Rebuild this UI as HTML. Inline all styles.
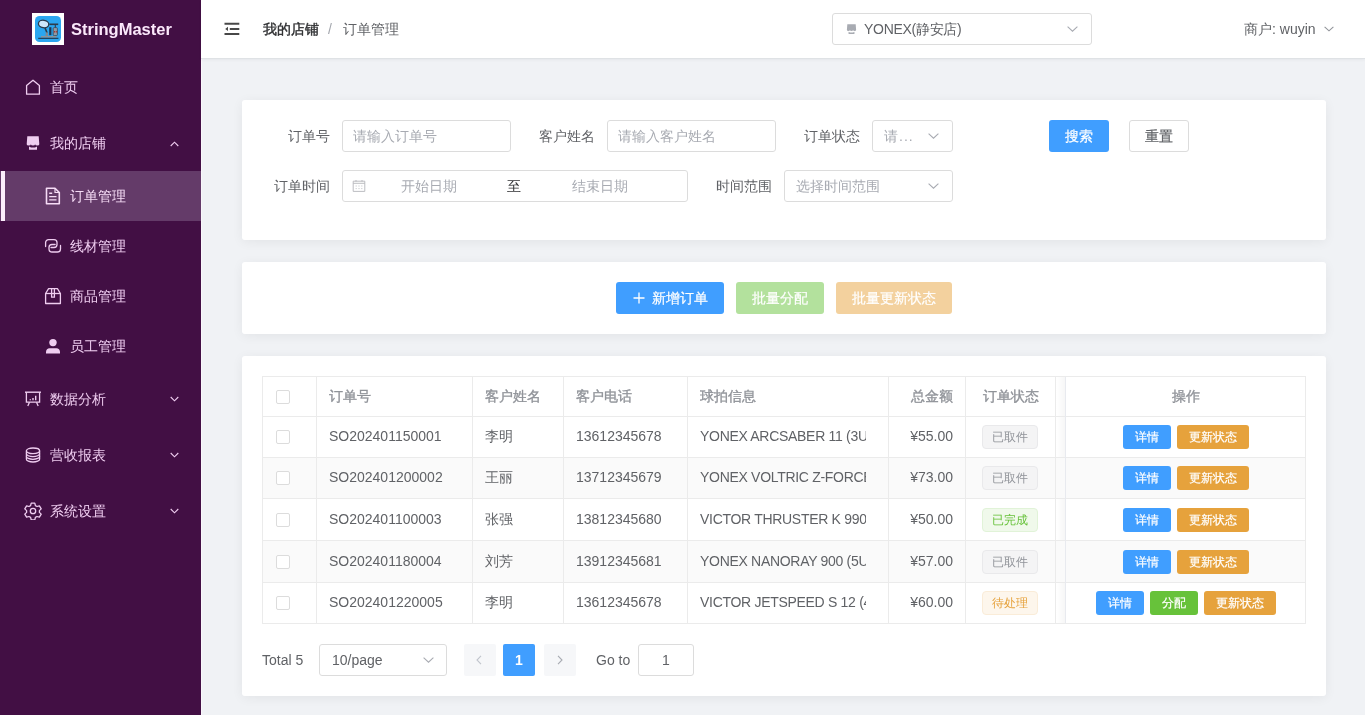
<!DOCTYPE html>
<html><head><meta charset="utf-8">
<style>
*{box-sizing:border-box;margin:0;padding:0}
html,body{width:1365px;height:715px;overflow:hidden}
#wrap{position:absolute;left:0;top:0;width:1365px;height:715px;will-change:transform}
body{font-family:"Liberation Sans",sans-serif;font-size:14px;color:#606266;background:#f0f2f5;position:relative}
.abs{position:absolute}
#side{position:absolute;left:0;top:0;width:201px;height:715px;background:#420f44}
.logo{position:absolute;left:32px;top:13px;width:32px;height:32px;background:#fff}
.logo .in{position:absolute;left:3px;top:3px;width:26px;height:26px;border-radius:6px;background:#2ea6ee}
.brand{position:absolute;left:71px;top:18px;font-size:16.5px;font-weight:bold;color:#fbe8fb;line-height:22px;white-space:nowrap}
.mi{position:absolute;left:0;width:201px;color:#efcdf0;line-height:20px;white-space:nowrap}
.mi .t{position:absolute;left:50px}
.mi.sub .t{left:70px}
.mi svg{position:absolute}
.mi .arr{position:absolute;left:170px}
.active{background:#643b69}
.active .bar{position:absolute;left:1px;top:0;width:4px;height:50px;background:#fbeefb}
#hdr{position:absolute;left:201px;top:0;width:1164px;height:59px;background:#fff;border-bottom:1px solid #dfe2e5;box-shadow:0 1px 3px rgba(0,21,41,.05)}
.card{position:absolute;left:242px;width:1084px;background:#fff;border-radius:3px;box-shadow:0 2px 12px rgba(0,0,0,.06)}
.lbl{position:absolute;color:#606266;white-space:nowrap;line-height:20px;text-align:right}
.inp{position:absolute;height:32px;border:1px solid #dcdcdc;border-radius:3px;background:#fff}
.ph{position:absolute;color:#a8abb2;white-space:nowrap;line-height:20px}
.btn{position:absolute;height:32px;border-radius:3px;color:#fff;text-align:center;line-height:32px;font-weight:500;white-space:nowrap;-webkit-text-stroke:0.2px currentColor}
.chev{position:absolute}
table{border-collapse:collapse}
.tbl{position:absolute;left:262px;top:376px;width:1044px;height:248px;border:1px solid #ebebeb;overflow:hidden;background:#fff}
.row{position:absolute;left:0;width:1044px;border-bottom:1px solid #ebeef5}
.vl{position:absolute;top:0;width:1px;height:247px;background:#ebeef5}
.cell{position:absolute;white-space:nowrap;line-height:20px;overflow:hidden}
.hd{color:#909399;font-weight:normal;-webkit-text-stroke:0.35px #909399}
.cb{position:absolute;left:14px;width:14px;height:14px;border:1px solid #dcdcdc;border-radius:2px;background:#fff}
.tag{position:absolute;height:24px;line-height:22px;font-size:12px;border-radius:4px;border:1px solid;padding:0 9px;white-space:nowrap}
.tinfo{background:#f4f4f5;border-color:#e9e9eb;color:#909399}
.tsucc{background:#f0f9eb;border-color:#e1f3d8;color:#67c23a}
.twarn{background:#fdf6ec;border-color:#faecd8;color:#e6a23c}
.sb{position:absolute;height:24px;line-height:24px;font-size:12px;color:#fff;border-radius:3px;text-align:center;white-space:nowrap;-webkit-text-stroke:0.2px #fff}
.bp{background:#409eff}.bs{background:#67c23a}.bw{background:#e6a23c}
</style></head><body><div id="wrap">
<div id="side">

  <div class="logo"><svg class="abs" style="left:0;top:0" width="32" height="32" viewBox="0 0 32 32"><rect x="3" y="3" width="26" height="26" rx="4.5" fill="#2ba6f0"/><g transform="translate(3,3)"><ellipse cx="8.6" cy="8" rx="5.2" ry="3.7" transform="rotate(8 8.6 8)" fill="#cfe6fa" stroke="#2d3a4a" stroke-width="1.3"/><path d="M10 11.8L12.4 17.8" stroke="#2d3a4a" stroke-width="1.6"/><rect x="10.6" y="16.4" width="2.4" height="4" fill="#7d8a96"/><rect x="14.2" y="11.2" width="2.2" height="8" fill="#1f3550"/><path d="M14.4 8.3H23.2" stroke="#2d3a4a" stroke-width="1.6"/><rect x="18.2" y="11.6" width="4.2" height="8" rx="1" fill="#8f9aa6" stroke="#2d3a4a" stroke-width="0.7"/><rect x="19" y="15" width="1.1" height="1.5" fill="#a33"/><rect x="20.8" y="15" width="1.1" height="1.5" fill="#a33"/><path d="M20.3 9v2.6" stroke="#2d3a4a" stroke-width="1.1"/><rect x="6" y="20" width="15.5" height="1.6" fill="#8b949c"/><path d="M3.2 22.3H23.4" stroke="#1c2b3d" stroke-width="1"/></g></svg></div>
  <div class="brand">StringMaster</div>
  <div class="mi" style="top:59px;height:56px">
    <svg style="left:25px;top:20px" width="16" height="16" viewBox="0 0 16 16"><path d="M1.6 15.2V6.6L8 1.2l6.4 5.4v8.6z" fill="none" stroke="#efcdf0" stroke-width="1.3" stroke-linejoin="round"/></svg>
    <span class="t" style="top:18px">首页</span>
  </div>
  <div class="mi" style="top:115px;height:56px">
    <svg style="left:26px;top:21px" width="14" height="15" viewBox="0 0 14 15"><path d="M0.7 8.2L1.3 0.3H12.7L13.3 8.2A2.1 1.4 0 0 1 9.1 8.2A2.1 1.4 0 0 1 4.9 8.2A2.1 1.4 0 0 1 0.7 8.2Z" fill="#efcdf0"/><path d="M3 10.4Q7 12.8 11 10.4V13.8H3Z" fill="#efcdf0"/></svg>
    <span class="t" style="top:18px">我的店铺</span>
    <svg class="arr" style="top:26px" width="9" height="6" viewBox="0 0 9 6"><path d="M0.7 5L4.5 1.2 8.3 5" fill="none" stroke="#efcdf0" stroke-width="1.1"/></svg>
  </div>
  <div class="mi sub active" style="top:171px;height:50px">
    <div class="bar"></div>
    <svg style="left:45px;top:16px" width="16" height="18" viewBox="0 0 16 18"><path d="M1.5 1.2h8.5l4.3 4.3v11.3H1.5z" fill="none" stroke="#f6dcf6" stroke-width="1.6" stroke-linejoin="round"/><path d="M10 1.2v4.3h4.3" fill="none" stroke="#f6dcf6" stroke-width="1.2"/><path d="M4.2 6.3h3M4.2 9.6h7.3M4.2 12.9h7.3" stroke="#f6dcf6" stroke-width="1.4"/></svg>
    <span class="t" style="top:15px;color:#f6dcf6">订单管理</span>
  </div>
  <div class="mi sub" style="top:221px;height:50px">
    <svg style="left:44px;top:16px" width="18" height="17" viewBox="0 0 18 17"><path d="M1.6 9.6V5.6a3 3 0 0 1 3-3H10a3 3 0 0 1 3 3v1.9a3 3 0 0 1-3 3H7" fill="none" stroke="#efcdf0" stroke-width="1.3" stroke-linecap="round"/><path d="M16.5 8.4V12a3 3 0 0 1-3 3H8a3 3 0 0 1-3-3v-1.5a3 3 0 0 1 3-3h3.1" fill="none" stroke="#efcdf0" stroke-width="1.3" stroke-linecap="round"/></svg>
    <span class="t" style="top:15px">线材管理</span>
  </div>
  <div class="mi sub" style="top:271px;height:50px">
    <svg style="left:44px;top:16px" width="18" height="18" viewBox="0 0 18 18"><path d="M1.6 6.5L4.6 1.6h8.8l3 4.9v10H1.6z" fill="none" stroke="#efcdf0" stroke-width="1.3" stroke-linejoin="round"/><path d="M1.6 6.5h14.8" stroke="#efcdf0" stroke-width="1.3"/><path d="M7.6 1.6v8.6h2.8V1.6" fill="none" stroke="#efcdf0" stroke-width="1.3"/></svg>
    <span class="t" style="top:15px">商品管理</span>
  </div>
  <div class="mi sub" style="top:321px;height:50px">
    <svg style="left:45px;top:17px" width="16" height="16" viewBox="0 0 16 16"><circle cx="8" cy="4.6" r="3.7" fill="#efcdf0"/><path d="M1 15.4v-1.6c0-2 1.6-3.6 3.6-3.6h6.8c2 0 3.6 1.6 3.6 3.6v1.6z" fill="#efcdf0"/></svg>
    <span class="t" style="top:15px">员工管理</span>
  </div>
  <div class="mi" style="top:371px;height:56px">
    <svg style="left:24px;top:20px" width="18" height="16" viewBox="0 0 18 16"><path d="M1 1.2h16" stroke="#efcdf0" stroke-width="1.4"/><path d="M2.4 1.2v10h13.2v-10" fill="none" stroke="#efcdf0" stroke-width="1.3"/><path d="M5.5 11.2L3.8 15M12.5 11.2L14.2 15" stroke="#efcdf0" stroke-width="1.3"/><path d="M6.3 8.2v1M9 7v2.2M11.7 4.8v4.4" stroke="#efcdf0" stroke-width="1.4"/></svg>
    <span class="t" style="top:18px">数据分析</span>
    <svg class="arr" style="top:25px" width="9" height="6" viewBox="0 0 9 6"><path d="M0.7 1L4.5 4.8 8.3 1" fill="none" stroke="#efcdf0" stroke-width="1.1"/></svg>
  </div>
  <div class="mi" style="top:427px;height:56px">
    <svg style="left:25px;top:20px" width="16" height="16" viewBox="0 0 16 16"><ellipse cx="8" cy="3.8" rx="6.6" ry="2.8" fill="none" stroke="#efcdf0" stroke-width="1.3"/><path d="M1.4 3.8v8.4c0 1.5 3 2.8 6.6 2.8s6.6-1.3 6.6-2.8V3.8" fill="none" stroke="#efcdf0" stroke-width="1.3"/><path d="M1.4 6.8c0 1.5 3 2.8 6.6 2.8s6.6-1.3 6.6-2.8M1.4 9.5c0 1.5 3 2.8 6.6 2.8s6.6-1.3 6.6-2.8" fill="none" stroke="#efcdf0" stroke-width="1.3"/></svg>
    <span class="t" style="top:18px">营收报表</span>
    <svg class="arr" style="top:25px" width="9" height="6" viewBox="0 0 9 6"><path d="M0.7 1L4.5 4.8 8.3 1" fill="none" stroke="#efcdf0" stroke-width="1.1"/></svg>
  </div>
  <div class="mi" style="top:483px;height:56px">
    <svg style="left:24px;top:19px" width="18" height="18" viewBox="0 0 18 18"><path d="M7.2 1.2h3.6l0.6 2.4 1.6 0.9 2.4-0.7 1.8 3.1-1.8 1.7v1.8l1.8 1.7-1.8 3.1-2.4-0.7-1.6 0.9-0.6 2.4H7.2l-0.6-2.4-1.6-0.9-2.4 0.7-1.8-3.1 1.8-1.7V8.6L0.8 6.9l1.8-3.1 2.4 0.7 1.6-0.9z" fill="none" stroke="#efcdf0" stroke-width="1.3" stroke-linejoin="round"/><circle cx="9" cy="9" r="2.7" fill="none" stroke="#efcdf0" stroke-width="1.3"/></svg>
    <span class="t" style="top:18px">系统设置</span>
    <svg class="arr" style="top:25px" width="9" height="6" viewBox="0 0 9 6"><path d="M0.7 1L4.5 4.8 8.3 1" fill="none" stroke="#efcdf0" stroke-width="1.1"/></svg>
  </div>
</div>
<div class="abs" style="left:201px;top:59px;width:1px;height:656px;background:#faf7fb"></div>
<div id="hdr">
  <svg style="position:absolute;left:22px;top:22px" width="18" height="14" viewBox="0 0 18 14"><path d="M1.5 1.8h14.8M6.8 6.9h9.5M1.5 12h14.8" stroke="#484848" stroke-width="2"/><path d="M2.2 6.9L5 4.8v4.2z" fill="#484848"/></svg>
  <span class="abs" style="left:62px;top:19px;line-height:20px;color:#303133;-webkit-text-stroke:0.4px #303133">我的店铺</span>
  <span class="abs" style="left:127px;top:19px;line-height:20px;color:#a3a6ad">/</span>
  <span class="abs" style="left:142px;top:19px;line-height:20px;color:#606266">订单管理</span>
  <div class="inp" style="left:631px;top:13px;width:260px;height:32px"></div>
  <svg style="position:absolute;left:645px;top:24px" width="11" height="11" viewBox="0 0 14 15"><path d="M0.7 8.2L1.3 0.3H12.7L13.3 8.2A2.1 1.4 0 0 1 9.1 8.2A2.1 1.4 0 0 1 4.9 8.2A2.1 1.4 0 0 1 0.7 8.2Z" fill="#a8abb2"/><path d="M3 10.4Q7 12.8 11 10.4V13.8H3Z" fill="#a8abb2"/></svg>
  <span class="abs" style="left:663px;top:19px;line-height:20px;color:#606266;white-space:nowrap;letter-spacing:-0.3px">YONEX(静安店)</span>
  <svg style="position:absolute;left:866px;top:26px" width="11" height="6" viewBox="0 0 11 6"><path d="M0.6 0.6L5.5 5.2 10.4 0.6" fill="none" stroke="#a8abb2" stroke-width="1.1"/></svg>
  <span class="abs" style="left:1043px;top:19px;line-height:20px;color:#606266;white-space:nowrap">商户: wuyin</span>
  <svg style="position:absolute;left:1123px;top:26px" width="10" height="6" viewBox="0 0 10 6"><path d="M0.6 0.8L5 4.8 9.4 0.8" fill="none" stroke="#909399" stroke-width="1.1"/></svg>
</div>
<div class="card" style="top:100px;height:140px">
  <span class="lbl" style="left:46px;top:26px">订单号</span>
  <div class="inp" style="left:100px;top:20px;width:169px"></div>
  <span class="ph" style="left:111px;top:26px">请输入订单号</span>
  <span class="lbl" style="left:297px;top:26px">客户姓名</span>
  <div class="inp" style="left:365px;top:20px;width:169px"></div>
  <span class="ph" style="left:376px;top:26px">请输入客户姓名</span>
  <span class="lbl" style="left:562px;top:26px">订单状态</span>
  <div class="inp" style="left:630px;top:20px;width:81px"></div>
  <span class="ph" style="left:642px;top:26px;letter-spacing:1px">请...</span>
  <svg class="chev" style="left:686px;top:33px" width="11" height="6" viewBox="0 0 11 6"><path d="M0.6 0.6L5.5 5.2 10.4 0.6" fill="none" stroke="#a8abb2" stroke-width="1.1"/></svg>
  <div class="btn bp" style="left:807px;top:20px;width:60px">搜索</div>
  <div class="btn" style="left:887px;top:20px;width:60px;border:1px solid #dcdcdc;color:#606266;line-height:30px;background:#fff">重置</div>
  <span class="lbl" style="left:32px;top:76px">订单时间</span>
  <div class="inp" style="left:100px;top:70px;width:346px"></div>
  <svg class="abs" style="left:110px;top:79px" width="14" height="13" viewBox="0 0 14 13"><path d="M1.2 2.2h11.6v10.2H1.2z" fill="none" stroke="#b4b6ba" stroke-width="0.9"/><path d="M1.2 4.3h11.6" stroke="#b4b6ba" stroke-width="0.9"/><path d="M4 1v1.6M10 1v1.6" stroke="#b4b6ba" stroke-width="0.9"/><path d="M3.6 7h1.2M6.4 7h1.2M9.2 7h1.2M3.6 9.6h1.2M6.4 9.6h1.2M9.2 9.6h1.2" stroke="#c4c6ca" stroke-width="0.9"/></svg>
  <span class="ph" style="left:159px;top:76px">开始日期</span>
  <span class="abs" style="left:265px;top:76px;line-height:20px;color:#303133">至</span>
  <span class="ph" style="left:330px;top:76px">结束日期</span>
  <span class="lbl" style="left:474px;top:76px">时间范围</span>
  <div class="inp" style="left:542px;top:70px;width:169px"></div>
  <span class="ph" style="left:554px;top:76px">选择时间范围</span>
  <svg class="chev" style="left:686px;top:83px" width="11" height="6" viewBox="0 0 11 6"><path d="M0.6 0.6L5.5 5.2 10.4 0.6" fill="none" stroke="#a8abb2" stroke-width="1.1"/></svg>
</div>
<div class="card" style="top:262px;height:72px">
  <div class="btn bp" style="left:374px;top:20px;width:108px"><svg style="position:absolute;left:17px;top:10px" width="12" height="12" viewBox="0 0 12 12"><path d="M6 0.5v11M0.5 6h11" stroke="#fff" stroke-width="1.3"/></svg><span style="position:absolute;left:36px;top:0">新增订单</span></div>
  <div class="btn" style="left:494px;top:20px;width:88px;background:#b3e19d">批量分配</div>
  <div class="btn" style="left:594px;top:20px;width:116px;background:#f3d19e">批量更新状态</div>
</div>
<div class="card" style="top:356px;height:340px">
  <span class="abs" style="left:20px;top:294px;line-height:20px;color:#606266;white-space:nowrap">Total 5</span>
  <div class="inp" style="left:77px;top:288px;width:128px"></div>
  <span class="abs" style="left:90px;top:294px;line-height:20px;color:#606266">10/page</span>
  <svg class="chev" style="left:181px;top:301px" width="11" height="6" viewBox="0 0 11 6"><path d="M0.6 0.6L5.5 5.2 10.4 0.6" fill="none" stroke="#a8abb2" stroke-width="1.1"/></svg>
  <div class="abs" style="left:222px;top:288px;width:32px;height:32px;background:#f6f7f9;border-radius:2px"></div>
  <svg class="abs" style="left:234px;top:299px" width="6" height="10" viewBox="0 0 6 10"><path d="M5 0.8L1 5 5 9.2" fill="none" stroke="#c0c4cc" stroke-width="1.1"/></svg>
  <div class="abs" style="left:261px;top:288px;width:32px;height:32px;background:#409eff;border-radius:2px;color:#fff;font-weight:bold;text-align:center;line-height:32px">1</div>
  <div class="abs" style="left:302px;top:288px;width:32px;height:32px;background:#f6f7f9;border-radius:2px"></div>
  <svg class="abs" style="left:315px;top:299px" width="6" height="10" viewBox="0 0 6 10"><path d="M1 0.8L5 5 1 9.2" fill="none" stroke="#a8abb2" stroke-width="1.1"/></svg>
  <span class="abs" style="left:354px;top:294px;line-height:20px;color:#606266;white-space:nowrap">Go to</span>
  <div class="inp" style="left:396px;top:288px;width:56px;text-align:center;line-height:30px;color:#606266">1</div>
</div>
<div class="tbl">
<div class="abs" style="left:793px;top:0;width:9px;height:246px;background:linear-gradient(to right,rgba(0,0,0,0.0),rgba(0,0,0,0.035))"></div>
<div class="abs" style="left:0;top:81px;width:1042px;height:40px;background:#fafafa"></div>
<div class="abs" style="left:0;top:164px;width:1042px;height:41px;background:#fafafa"></div>
<div class="abs" style="left:0;top:39px;width:1042px;height:1px;background:#ebebeb"></div>
<div class="abs" style="left:0;top:80px;width:1042px;height:1px;background:#ebebeb"></div>
<div class="abs" style="left:0;top:121px;width:1042px;height:1px;background:#ebebeb"></div>
<div class="abs" style="left:0;top:163px;width:1042px;height:1px;background:#ebebeb"></div>
<div class="abs" style="left:0;top:205px;width:1042px;height:1px;background:#ebebeb"></div>
<div class="abs" style="left:53px;top:0;width:1px;height:246px;background:#ebebeb"></div>
<div class="abs" style="left:209px;top:0;width:1px;height:246px;background:#ebebeb"></div>
<div class="abs" style="left:300px;top:0;width:1px;height:246px;background:#ebebeb"></div>
<div class="abs" style="left:424px;top:0;width:1px;height:246px;background:#ebebeb"></div>
<div class="abs" style="left:625px;top:0;width:1px;height:246px;background:#ebebeb"></div>
<div class="abs" style="left:702px;top:0;width:1px;height:246px;background:#ebebeb"></div>
<div class="abs" style="left:792px;top:0;width:1px;height:246px;background:#ebebeb"></div>

<div class="abs" style="left:802px;top:0;width:1px;height:246px;background:#e8eaef"></div>
<div class="cb" style="left:13px;top:12.5px"></div>
<div class="cb" style="left:13px;top:53.0px"></div>
<div class="cb" style="left:13px;top:94.0px"></div>
<div class="cb" style="left:13px;top:135.5px"></div>
<div class="cb" style="left:13px;top:177.5px"></div>
<div class="cb" style="left:13px;top:219.0px"></div>
<span class="cell hd" style="left:66px;top:8.5px;">订单号</span>
<span class="cell hd" style="left:222px;top:8.5px;">客户姓名</span>
<span class="cell hd" style="left:313px;top:8.5px;">客户电话</span>
<span class="cell hd" style="left:437px;top:8.5px;">球拍信息</span>
<span class="cell hd" style="left:625px;top:8.5px;width:65px;text-align:right">总金额</span>
<span class="cell hd" style="left:702px;top:8.5px;width:91px;text-align:center">订单状态</span>
<span class="cell hd" style="left:802px;top:8.5px;width:241px;text-align:center">操作</span>
<span class="cell " style="left:66px;top:49.0px;">SO202401150001</span>
<span class="cell " style="left:222px;top:49.0px;">李明</span>
<span class="cell " style="left:313px;top:49.0px;">13612345678</span>
<span class="cell " style="left:437px;top:49.0px;width:166px;letter-spacing:-0.3px">YONEX ARCSABER 11 (3U/G5)</span>
<span class="cell " style="left:625px;top:49.0px;width:65px;text-align:right">¥55.00</span>
<span class="tag tinfo" style="left:719px;top:48.0px">已取件</span>
<div class="sb bp" style="left:860px;top:48.0px;width:48px">详情</div>
<div class="sb bw" style="left:914px;top:48.0px;width:72px">更新状态</div>
<span class="cell " style="left:66px;top:90.0px;">SO202401200002</span>
<span class="cell " style="left:222px;top:90.0px;">王丽</span>
<span class="cell " style="left:313px;top:90.0px;">13712345679</span>
<span class="cell " style="left:437px;top:90.0px;width:166px;letter-spacing:-0.3px">YONEX VOLTRIC Z-FORCE II (3U)</span>
<span class="cell " style="left:625px;top:90.0px;width:65px;text-align:right">¥73.00</span>
<span class="tag tinfo" style="left:719px;top:89.0px">已取件</span>
<div class="sb bp" style="left:860px;top:89.0px;width:48px">详情</div>
<div class="sb bw" style="left:914px;top:89.0px;width:72px">更新状态</div>
<span class="cell " style="left:66px;top:131.5px;">SO202401100003</span>
<span class="cell " style="left:222px;top:131.5px;">张强</span>
<span class="cell " style="left:313px;top:131.5px;">13812345680</span>
<span class="cell " style="left:437px;top:131.5px;width:166px;letter-spacing:-0.3px">VICTOR THRUSTER K 9900 (3U)</span>
<span class="cell " style="left:625px;top:131.5px;width:65px;text-align:right">¥50.00</span>
<span class="tag tsucc" style="left:719px;top:130.5px">已完成</span>
<div class="sb bp" style="left:860px;top:130.5px;width:48px">详情</div>
<div class="sb bw" style="left:914px;top:130.5px;width:72px">更新状态</div>
<span class="cell " style="left:66px;top:173.5px;">SO202401180004</span>
<span class="cell " style="left:222px;top:173.5px;">刘芳</span>
<span class="cell " style="left:313px;top:173.5px;">13912345681</span>
<span class="cell " style="left:437px;top:173.5px;width:166px;letter-spacing:-0.3px">YONEX NANORAY 900 (5U/G6)</span>
<span class="cell " style="left:625px;top:173.5px;width:65px;text-align:right">¥57.00</span>
<span class="tag tinfo" style="left:719px;top:172.5px">已取件</span>
<div class="sb bp" style="left:860px;top:172.5px;width:48px">详情</div>
<div class="sb bw" style="left:914px;top:172.5px;width:72px">更新状态</div>
<span class="cell " style="left:66px;top:215.0px;">SO202401220005</span>
<span class="cell " style="left:222px;top:215.0px;">李明</span>
<span class="cell " style="left:313px;top:215.0px;">13612345678</span>
<span class="cell " style="left:437px;top:215.0px;width:166px;letter-spacing:-0.3px">VICTOR JETSPEED S 12 (4U)</span>
<span class="cell " style="left:625px;top:215.0px;width:65px;text-align:right">¥60.00</span>
<span class="tag twarn" style="left:719px;top:214.0px">待处理</span>
<div class="sb bp" style="left:833px;top:214.0px;width:48px">详情</div>
<div class="sb bs" style="left:887px;top:214.0px;width:48px">分配</div>
<div class="sb bw" style="left:941px;top:214.0px;width:72px">更新状态</div>
</div>
</div></body></html>
